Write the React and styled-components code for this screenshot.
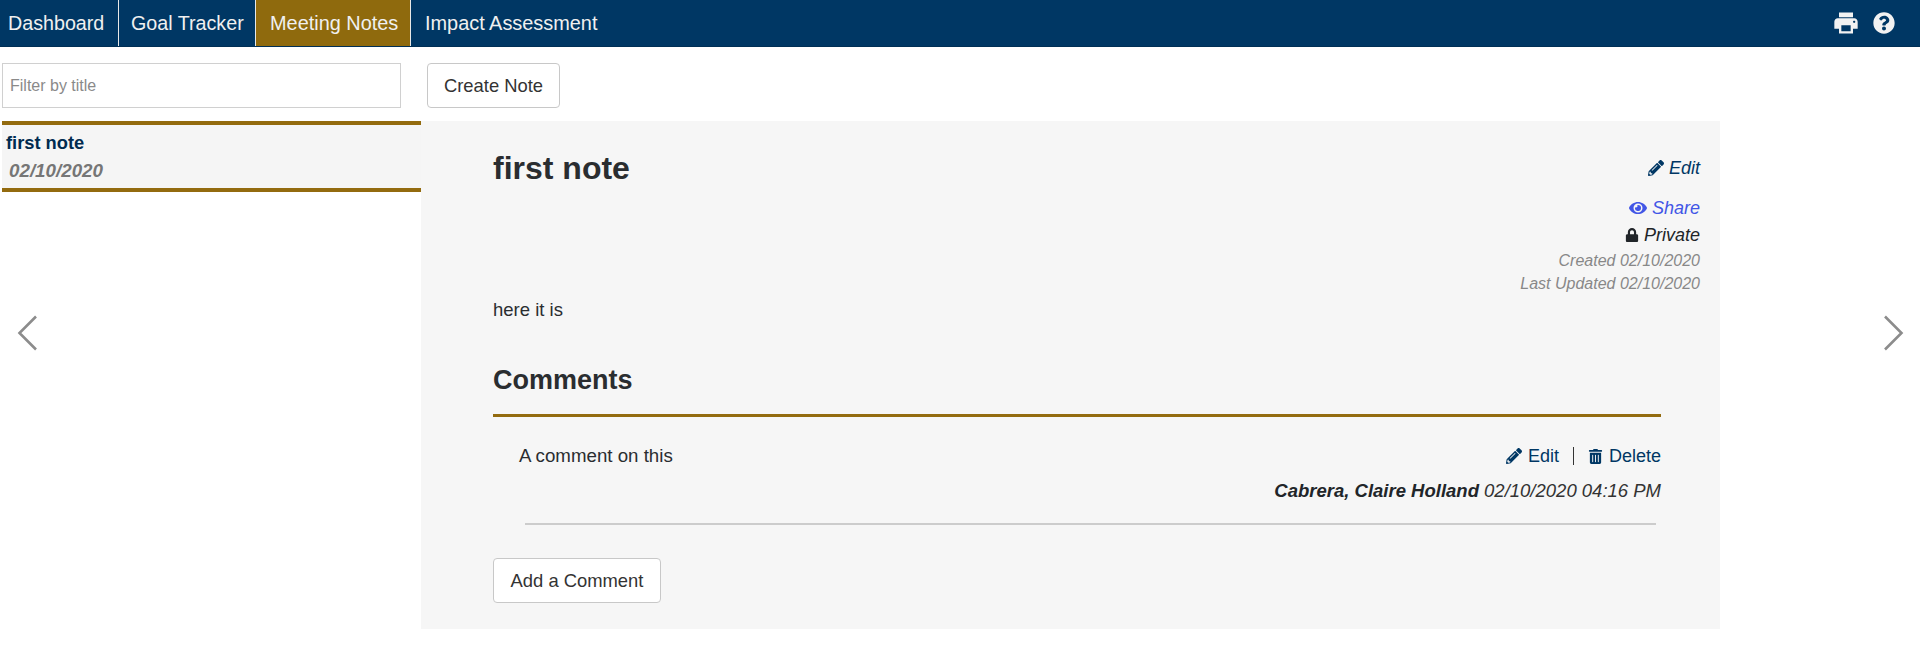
import React from 'react';
import styled, { createGlobalStyle } from 'styled-components';
import { FaPencilAlt, FaEye, FaLock, FaTrashAlt, FaQuestionCircle } from 'react-icons/fa';
import { MdPrint } from 'react-icons/md';

const GlobalStyle = createGlobalStyle`
  html, body {
    margin: 0;
    padding: 0;
    background: #fff;
    font-family: "Liberation Sans", Arial, sans-serif;
    font-size: 18.5px;
    color: #2a2d30;
  }
  * { box-sizing: border-box; }
`;

const Page = styled.div`
  position: relative;
  width: 1920px;
  height: 670px;
  overflow: hidden;
`;

const Nav = styled.nav`
  display: flex;
  align-items: stretch;
  height: 47px;
  background: #003764;
  border-bottom: 1px solid #002f55;
`;

const Tabs = styled.div`
  display: flex;
  flex: 1;
`;

const Tab = styled.a`
  display: flex;
  align-items: center;
  width: ${({ width }) => width}px;
  padding-left: ${({ pad }) => pad}px;
  color: #f0f0f0;
  font-size: ${({ size }) => size || 19.7}px;
  background: ${({ active }) => (active ? '#8f6a0d' : 'transparent')};
  border-right: 1px solid ${({ divider }) => (divider ? '#e8e8e8' : 'transparent')};
`;

const NavIcons = styled.div`
  display: flex;
  align-items: center;
  gap: 13px;
  padding-right: 25px;
  color: #f2f2f2;
`;

const Toolbar = styled.div`
  display: flex;
  align-items: stretch;
  margin-top: 16px;
  padding-left: 2px;
  height: 45px;
`;

const FilterInput = styled.input`
  width: 399px;
  height: 45px;
  padding: 0 7px;
  border: 1px solid #d0d0d0;
  font: 16px "Liberation Sans", Arial, sans-serif;
  outline: none;
  &::placeholder { color: #8a8a8a; }
`;

const Button = styled.button`
  height: 45px;
  width: ${({ width }) => width}px;
  padding: 0;
  background: #fff;
  border: 1px solid #c8c8c8;
  border-radius: 4px;
  color: #333;
  font: 18.4px "Liberation Sans", Arial, sans-serif;
`;

const CreateButton = styled(Button)`
  margin-left: 26px;
`;

const Content = styled.div`
  display: flex;
  margin-top: 13px;
`;

const Sidebar = styled.aside`
  width: 421px;
  padding-left: 2px;
`;

const NoteItem = styled.div`
  height: 71px;
  padding: 6px 4px 0;
  background: #f5f5f5;
  border-top: 4px solid #936b0f;
  border-bottom: 4px solid #936b0f;
`;

const NoteTitle = styled.div`
  color: #002b50;
  font-size: 18.3px;
  font-weight: 700;
  line-height: 24px;
`;

const NoteDate = styled.div`
  margin-top: 5px;
  margin-left: 3px;
  color: #767676;
  font-size: 18.8px;
  line-height: 21px;
  font-weight: 700;
  font-style: italic;
`;

const Panel = styled.main`
  width: 1299px;
  height: 508px;
  padding: 0 20px 0 72px;
  background: #f6f6f6;
`;

const Header = styled.header`
  display: flex;
  justify-content: space-between;
  margin-bottom: 3px;
`;

const NoteHeading = styled.h2`
  margin: 28px 0 0;
  font-size: 32px;
  line-height: 38px;
  font-weight: 700;
`;

const Meta = styled.div`
  display: flex;
  flex-direction: column;
  align-items: flex-end;
  padding-top: 35px;
`;

const MetaLine = styled.div`
  display: flex;
  align-items: center;
  gap: 5px;
  height: ${({ small }) => (small ? 22 : 24)}px;
  margin-top: ${({ gap }) => gap}px;
  color: ${({ color }) => color};
  font-size: ${({ small }) => (small ? 16 : 18)}px;
  font-style: italic;
`;

const BodyText = styled.p`
  margin: 0;
  line-height: 24px;
`;

const Comments = styled.section`
  margin-right: 39px;
`;

const CommentsHeading = styled.h3`
  margin: 41px 0 0;
  padding-bottom: 17px;
  font-size: 27px;
  line-height: 34px;
  font-weight: 700;
  border-bottom: 3px solid #936b0f;
`;

const Comment = styled.div`
  display: flex;
  justify-content: space-between;
  padding: 27px 0 0 26px;
  line-height: 24px;
`;

const CommentText = styled.span`
  font-size: 18.7px;
`;

const CommentActions = styled.div`
  display: flex;
  flex-direction: column;
  align-items: flex-end;
  gap: 11px;
`;

const ActionRow = styled.div`
  display: flex;
  align-items: center;
  gap: 6px;
  height: 24px;
  font-size: 18px;
  color: #003764;
`;

const Pipe = styled.span`
  width: 1px;
  height: 18px;
  margin: 0 8px;
  background: #333;
`;

const Byline = styled.div`
  font-style: italic;
  color: #333;
  b { color: #212529; }
`;

const Rule = styled.hr`
  margin: 20px 5px 0 32px;
  border: 0;
  border-top: 2px solid #ccc;
`;

const AddButton = styled(Button)`
  margin-top: 33px;
`;

const Arrow = styled.svg`
  position: absolute;
  top: 315px;
  ${({ side }) => (side === 'left' ? 'left: 17px;' : 'right: 16px;')}
  width: 22px;
  height: 36px;
  fill: none;
  stroke: #8c8c8c;
  stroke-width: 2.6;
`;

const App = () => (
  <Page>
    <GlobalStyle />
    <Nav>
      <Tabs>
        <Tab width={119} pad={8} divider>Dashboard</Tab>
        <Tab width={137} pad={12} divider>Goal Tracker</Tab>
        <Tab width={155} pad={14} size={19.9} active divider>Meeting Notes</Tab>
        <Tab width={220} pad={14} size={19.9}>Impact Assessment</Tab>
      </Tabs>
      <NavIcons>
        <MdPrint size={28} />
        <FaQuestionCircle size={22} />
      </NavIcons>
    </Nav>
    <Toolbar>
      <FilterInput placeholder="Filter by title" />
      <CreateButton width={133}>Create Note</CreateButton>
    </Toolbar>
    <Content>
      <Sidebar>
        <NoteItem>
          <NoteTitle>first note</NoteTitle>
          <NoteDate>02/10/2020</NoteDate>
        </NoteItem>
      </Sidebar>
      <Panel>
        <Header>
          <NoteHeading>first note</NoteHeading>
          <Meta>
            <MetaLine color="#003764"><FaPencilAlt size={16} /> Edit</MetaLine>
            <MetaLine gap={16} color="#4256e6"><FaEye size={18} /> Share</MetaLine>
            <MetaLine gap={3} color="#212529"><FaLock size={14} /> Private</MetaLine>
            <MetaLine gap={3} small color="#888">Created 02/10/2020</MetaLine>
            <MetaLine gap={1} small color="#888">Last Updated 02/10/2020</MetaLine>
          </Meta>
        </Header>
        <BodyText>here it is</BodyText>
        <Comments>
          <CommentsHeading>Comments</CommentsHeading>
          <Comment>
            <CommentText>A comment on this</CommentText>
            <CommentActions>
              <ActionRow>
                <FaPencilAlt size={16} /> Edit
                <Pipe />
                <FaTrashAlt size={15} /> Delete
              </ActionRow>
              <Byline><b>Cabrera, Claire Holland</b> 02/10/2020 04:16 PM</Byline>
            </CommentActions>
          </Comment>
          <Rule />
          <AddButton width={168}>Add a Comment</AddButton>
        </Comments>
      </Panel>
    </Content>
    <Arrow side="left" viewBox="0 0 22 36"><path d="M19 1.5 2.5 18 19 34.5" /></Arrow>
    <Arrow side="right" viewBox="0 0 22 36"><path d="M3 1.5 19.5 18 3 34.5" /></Arrow>
  </Page>
);

export default App;
